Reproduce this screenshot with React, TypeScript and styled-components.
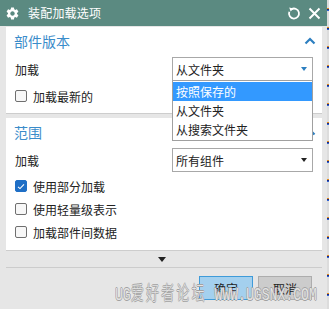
import React, { FC } from 'react'
import styled, { createGlobalStyle } from 'styled-components'
import { MdSettings } from 'react-icons/md'

const GlobalStyle = createGlobalStyle`
  html, body {
    margin: 0;
    padding: 0;
    background: #e6e6e6;
  }
  body {
    font-family: "Noto Sans CJK SC", "Noto Sans", sans-serif;
    font-size: 12px;
    color: #222;
  }
`

const Page = styled.div`
  position: relative;
  width: 329px;
  height: 309px;
  display: flex;
  overflow: hidden;
`

const Dialog = styled.div`
  width: 327px;
  height: 309px;
  display: flex;
  flex-direction: column;
  background: #e6e6e6;
`

const EdgeStrip = styled.div`
  width: 2px;
  height: 309px;
  background: repeating-linear-gradient(
    to bottom,
    #dcdcdc 0 8px,
    #e08a20 8px 9px,
    #1c2a80 9px 10px,
    #3060d0 10px 11px,
    #dcdcdc 11px 19px
  );
`

const TitleBar = styled.div`
  height: 26px;
  background: #5b8a81;
  display: flex;
  align-items: center;
  padding: 0 6px 0 5px;
  color: #fff;
`

const TitleText = styled.div`
  flex: 1;
  margin-left: 8px;
  font-size: 12px;
  letter-spacing: 0.2px;
  line-height: 26px;
`

const TitleIcons = styled.div`
  display: flex;
  align-items: center;
  gap: 6px;
`

const Body = styled.div`
  flex: 1;
  display: flex;
  flex-direction: column;
  padding: 1px 5px 0 6px;
  gap: 4px;
`

const Panel = styled.div<{ $bottom: number }>`
  position: relative;
  background: #fff;
  border-bottom: 1px solid #cdcdcd;
  padding: 0 9px ${({ $bottom }) => $bottom}px 8px;
`

const SectionHead = styled.div`
  height: 28px;
  display: flex;
  align-items: center;
  justify-content: space-between;
  color: #3a8cca;
  font-size: 14px;
  margin-right: -3px;
`

const FieldRow = styled.div<{ $top: number }>`
  display: flex;
  align-items: center;
  justify-content: space-between;
  margin-top: ${({ $top }) => $top}px;
  padding-left: 1px;
`

const Select = styled.div`
  position: relative;
  width: 141px;
  height: 24px;
  box-sizing: border-box;
  border: 1px solid #a8a8a8;
  display: flex;
  align-items: center;
  justify-content: space-between;
  padding: 0 5px 0 3px;
  background: #fff;
`

const Caret = styled.span<{ $color: string }>`
  width: 0;
  height: 0;
  border-left: 3.5px solid transparent;
  border-right: 3.5px solid transparent;
  border-top: 4px solid ${({ $color }) => $color};
`

const DropList = styled.div`
  position: absolute;
  z-index: 5;
  left: -1px;
  top: 22px;
  width: 141px;
  box-sizing: border-box;
  border: 1px solid #a0a0a0;
  padding: 1px 0;
  background: #fff;
`

const DropItem = styled.div<{ $active?: boolean }>`
  height: 19px;
  line-height: 19px;
  padding-left: 3px;
  background: ${({ $active }) => ($active ? '#3399ff' : 'transparent')};
  color: ${({ $active }) => ($active ? '#fff' : '#222')};
`

const CheckList = styled.div<{ $top: number }>`
  display: flex;
  flex-direction: column;
  gap: 3px;
  margin-top: ${({ $top }) => $top}px;
`

const CheckRow = styled.label`
  height: 20px;
  display: flex;
  align-items: center;
  gap: 6px;
  padding-left: 1px;
`

const Box = styled.span<{ $checked?: boolean }>`
  width: 12px;
  height: 12px;
  box-sizing: border-box;
  border-radius: 2px;
  border: 1px solid ${({ $checked }) => ($checked ? '#1f6fc6' : '#6f6f6f')};
  background: ${({ $checked }) => ($checked ? '#1f6fc6' : '#f7f7f7')};
  display: flex;
  align-items: center;
  justify-content: center;
`

const Expander = styled.div`
  height: 16px;
  display: flex;
  align-items: center;
  justify-content: center;
  margin-top: -4px;
  border-bottom: 1px solid #cccccc;
  padding-right: 4px;
`

const ExpandCaret = styled.span`
  width: 0;
  height: 0;
  border-left: 4px solid transparent;
  border-right: 4px solid transparent;
  border-top: 5px solid #222;
`

const ButtonRow = styled.div`
  display: flex;
  justify-content: flex-end;
  gap: 5px;
  padding: 4px 10px 0 0;
`

const Button = styled.div<{ $primary?: boolean }>`
  width: 54px;
  height: 24px;
  box-sizing: border-box;
  display: flex;
  align-items: center;
  justify-content: center;
  font-size: 12px;
  color: #222;
  background: ${({ $primary }) => ($primary ? '#a4d0ee' : '#cccccc')};
  border: 1px solid ${({ $primary }) => ($primary ? '#3f9bd9' : '#adadad')};
`

const Watermark = styled.div`
  position: absolute;
  z-index: 10;
  left: 115px;
  top: 281px;
  font-family: "Liberation Mono", "Noto Sans CJK SC", monospace;
  font-size: 19px;
  line-height: 22px;
  white-space: nowrap;
  color: rgba(250, 250, 250, 0.75);
  transform: scaleX(0.69);
  transform-origin: left top;
  text-shadow: 0.8px 0 0 #a2a2a2, -0.8px 0 0 #a2a2a2, 0 0.8px 0 #a2a2a2, 0 -0.8px 0 #a2a2a2;
  pointer-events: none;
`

const WaterCjk = styled.span`
  font-family: "Noto Sans CJK SC", sans-serif;
  font-weight: 300;
  letter-spacing: 3px;
`

const ChevronUp: FC = () => (
  <svg width="12" height="8" viewBox="0 0 12 8">
    <polyline points="1.5,6.5 6,2 10.5,6.5" fill="none" stroke="#2d7fc0" strokeWidth="2.2" />
  </svg>
)

const RefreshIcon: FC = () => (
  <svg width="15" height="15" viewBox="0 0 15 15">
    <path d="M4.5 3.2 A5 5 0 1 1 2.3 5.8" fill="none" stroke="#fff" strokeWidth="1.8" />
    <polygon points="2.2,1.6 6.6,2.4 3.6,5.6" fill="#fff" />
  </svg>
)

const CloseIcon: FC = () => (
  <svg width="13" height="13" viewBox="0 0 13 13">
    <path d="M1.5 1.5 L11.5 11.5 M11.5 1.5 L1.5 11.5" stroke="#fff" strokeWidth="2" />
  </svg>
)

const Tick: FC = () => (
  <svg width="8" height="7" viewBox="0 0 8 7">
    <polyline points="1,3.8 3,5.6 7,1.4" fill="none" stroke="#fff" strokeWidth="1.1" />
  </svg>
)

const Check: FC<{ label: string; checked?: boolean }> = ({ label, checked }) => (
  <CheckRow>
    <Box $checked={checked}>{checked && <Tick />}</Box>
    <span>{label}</span>
  </CheckRow>
)

const App: FC = () => (
  <Page>
    <GlobalStyle />
    <Dialog>
      <TitleBar>
        <MdSettings size={15} color="#fff" />
        <TitleText>装配加载选项</TitleText>
        <TitleIcons>
          <RefreshIcon />
          <CloseIcon />
        </TitleIcons>
      </TitleBar>
      <Body>
        <Panel $bottom={7}>
          <SectionHead>
            <span>部件版本</span>
            <ChevronUp />
          </SectionHead>
          <FieldRow $top={2}>
            <span>加载</span>
            <Select>
              <span>从文件夹</span>
              <Caret $color="#2d7fc0" />
              <DropList>
                <DropItem $active>按照保存的</DropItem>
                <DropItem>从文件夹</DropItem>
                <DropItem>从搜索文件夹</DropItem>
              </DropList>
            </Select>
          </FieldRow>
          <CheckList $top={5}>
            <Check label="加载最新的" />
          </CheckList>
        </Panel>
        <Panel $bottom={8}>
          <SectionHead>
            <span>范围</span>
            <ChevronUp />
          </SectionHead>
          <FieldRow $top={2}>
            <span>加载</span>
            <Select>
              <span>所有组件</span>
              <Caret $color="#222" />
            </Select>
          </FieldRow>
          <CheckList $top={4}>
            <Check label="使用部分加载" checked />
            <Check label="使用轻量级表示" />
            <Check label="加载部件间数据" />
          </CheckList>
        </Panel>
        <Expander>
          <ExpandCaret />
        </Expander>
        <ButtonRow>
          <Button $primary>确定</Button>
          <Button>取消</Button>
        </ButtonRow>
      </Body>
    </Dialog>
    <EdgeStrip />
    <Watermark>
      UG<WaterCjk>爱好者论坛</WaterCjk> WWW.UGSNX.COM
    </Watermark>
  </Page>
)

export default App
